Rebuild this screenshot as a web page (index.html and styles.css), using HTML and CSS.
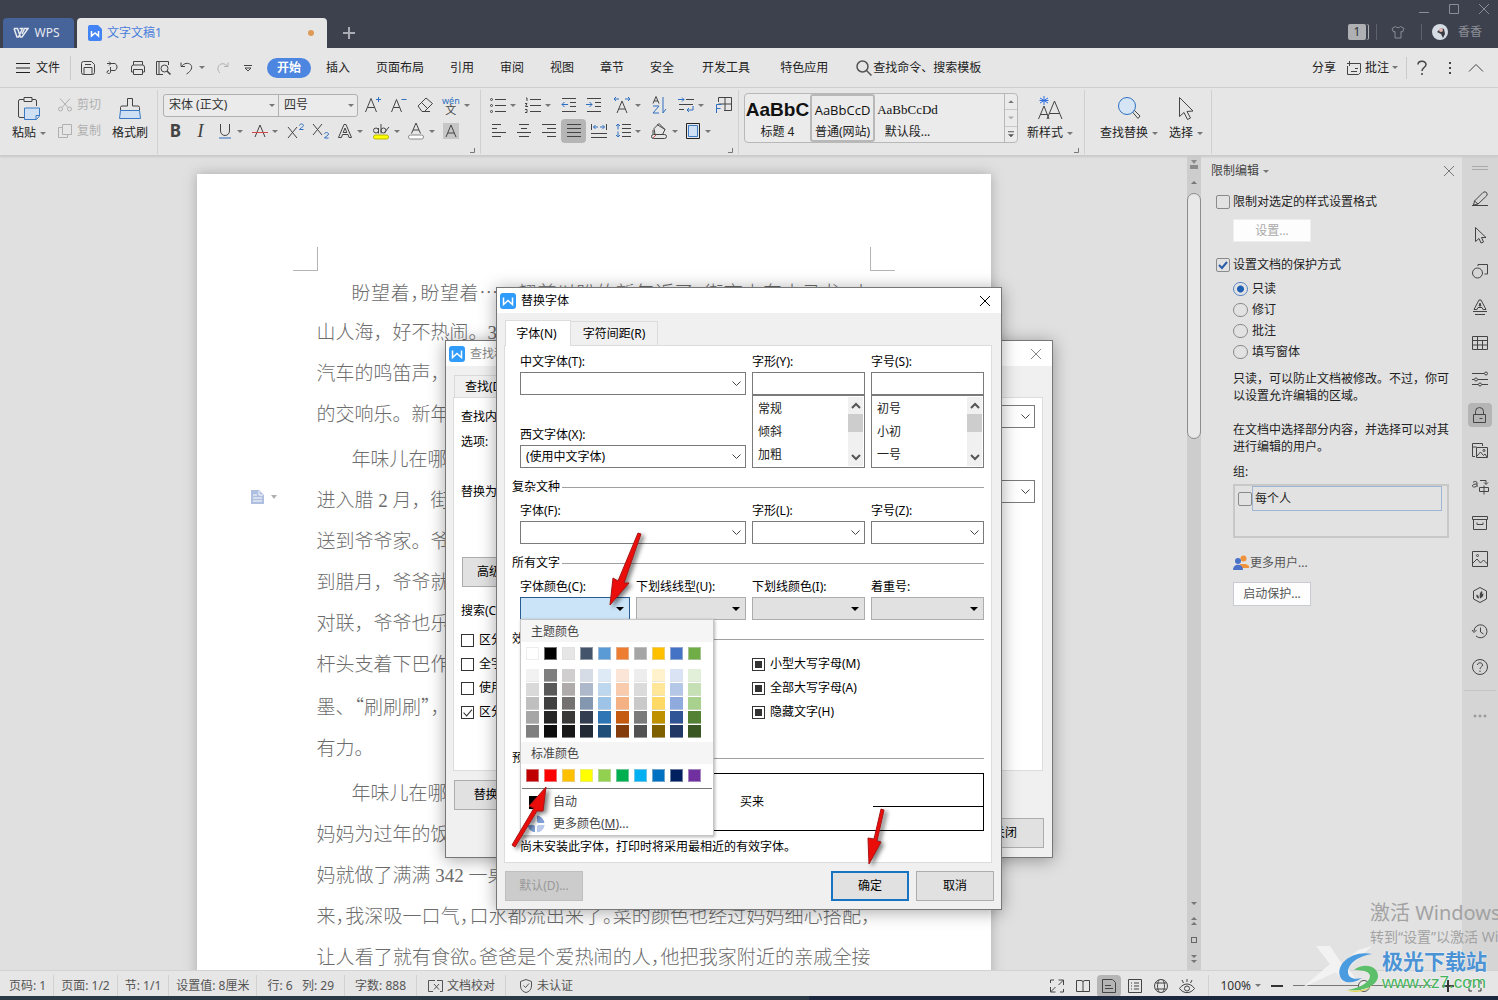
FILE: index.html
```html
<!DOCTYPE html>
<html lang="zh-CN">
<head>
<meta charset="utf-8">
<title>文字文稿1 - WPS</title>
<link rel="stylesheet" href="styles.css">
</head>
<body>
<svg class="defs" aria-hidden="true">
  <symbol id="w-logo" viewBox="0 0 16 16"><rect width="16" height="16" rx="3" fill="#2f9bfa"/><path d="M3.500 4.500v7l4.500-4 4.500 4v-7" fill="none" stroke="#fff" stroke-width="1.500"/></symbol>
  <symbol id="close" viewBox="0 0 12 12"><path d="M1 1l10 10M11 1L1 11"/></symbol>
  <symbol id="chev-up" viewBox="0 0 10 8"><path d="M1 6l4-4 4 4" stroke-width="2"/></symbol>
  <symbol id="chev-down" viewBox="0 0 10 8"><path d="M1 2l4 4 4-4" stroke-width="2"/></symbol>
</svg>
<div class="app">

<header class="titlebar">
  <button class="home-tab"><svg class="ic" width="16" height="12" viewBox="0 0 16 12"><path d="M1 1.500h3.500l3 8.500h1.500L15 1.500h-3.500L9 7M1 1.500L4 10h1.500L9.500 1.500H6.500" stroke-width="1.500"/></svg>WPS</button>
  <div class="doc-tab"><svg width="14" height="16" viewBox="0 0 14 16"><path d="M2 0h8l4 4v10a2 2 0 0 1-2 2H2a2 2 0 0 1-2-2V2a2 2 0 0 1 2-2z" fill="#4284f5"/><path d="M3.500 6v5l3.500-3 3.500 3V6" fill="none" stroke="#fff" stroke-width="1.500"/></svg><span>文字文稿1</span><i class="unsaved"></i></div>
  <button class="new-tab" aria-label="新建"><svg class="ic" width="12" height="12" viewBox="0 0 12 12"><path d="M6 0v12M0 6h12" stroke-width="2"/></svg></button>
  <div class="title-right">
    <div class="win-ctl"><svg class="ic" width="12" height="12" viewBox="0 0 12 12"><path d="M1 9.500h10"/></svg><svg class="ic" width="12" height="12" viewBox="0 0 12 12"><path d="M1.500 1.500h9v9h-9z"/></svg><svg class="ic" width="12" height="12"><use href="#close"/></svg></div>
    <div class="account"><span class="badge">1</span><i class="vline"></i><svg class="ic shirt" width="14" height="14" viewBox="0 0 14 14"><path d="M4.500 1.500c1 1.500 4 1.500 5 0l3.500 2-1.500 3.500-1.500-.5v6.500H4V6.500L2.500 7 1 3.500z"/></svg><i class="vline"></i><svg width="16" height="16" viewBox="0 0 16 16"><circle cx="8" cy="8" r="8" fill="#d5dce3"/><path d="M5 8l4-4 3 1 1 5-2 4-2-4z" fill="#3a3a44"/><circle cx="9" cy="6" r="2" fill="#e0b8b0"/></svg><span>香香</span></div>
  </div>
</header>

<nav class="menubar">
  <button class="file-btn"><svg class="ic" width="14" height="12" viewBox="0 0 14 12"><path d="M0 1.500h14M0 6h14M0 10.500h14"/></svg>文件</button>
  <i class="vline"></i>
  <div class="quick">
    <button class="tool" aria-label="保存"><svg class="ic" width="16" height="16" viewBox="0 0 16 16"><path d="M1.500 3.500a2 2 0 0 1 2-2h8l3 3v8a2 2 0 0 1-2 2h-9a2 2 0 0 1-2-2zM4 14.500v-7h8v7M5 4.500h6"/></svg></button>
    <button class="tool" aria-label="输出"><svg class="ic" width="16" height="16" viewBox="0 0 16 16"><path d="M2 3.500h8a4 4 0 0 1 0 7H5.500V7M5.500 10.500v2a2 2 0 0 1-3.500 0 2 2 0 0 1 2-2M4 1.500l2 2-2 2"/></svg></button>
    <button class="tool" aria-label="打印"><svg class="ic" width="16" height="16" viewBox="0 0 16 16"><path d="M3.500 5V1.500h9V5M3.500 12h-2V7a2 2 0 0 1 2-2h9a2 2 0 0 1 2 2v5h-2M3.500 9.500h9v5h-9z"/></svg></button>
    <button class="tool" aria-label="打印预览"><svg class="ic" width="16" height="16" viewBox="0 0 16 16"><path d="M13.500 5V1.500h-12v13H8M4 1.500v13"/><circle cx="9.500" cy="8.500" r="3.500"/><path d="M12 11l3.500 3.500" stroke-width="1.500"/></svg></button>
    <button class="tool drop" aria-label="撤销"><svg class="ic" width="16" height="16" viewBox="0 0 16 16"><path d="M2 2.500v4h4M2.500 6.500C5 3 9 2.500 11.500 4.500c2.500 2.500 1 6.500-4 9.500"/></svg></button>
    <button class="tool dim" aria-label="恢复"><svg class="ic" width="16" height="16" viewBox="0 0 16 16"><path d="M13 2.500v4H9M12.500 6.500C10 3 6 3 4 5.500c-2 3-1 6 1 7.500"/></svg></button>
    <button class="tool" aria-label="更多"><svg class="ic" width="10" height="10" viewBox="0 0 10 10"><path d="M1 2.500h8M2 5l3 3 3-3z"/></svg></button>
  </div>
  <div class="tabs">
    <a href="#" class="active">开始</a><a href="#">插入</a><a href="#">页面布局</a><a href="#">引用</a><a href="#">审阅</a><a href="#">视图</a><a href="#">章节</a><a href="#">安全</a><a href="#" class="addon">开发工具</a><a href="#" class="addon">特色应用</a>
  </div>
  <button class="search"><svg class="ic" width="16" height="16" viewBox="0 0 16 16"><circle cx="6.500" cy="6.500" r="5.500" stroke-width="1.500"/><path d="M10.500 10.500l5 5" stroke-width="1.500"/></svg>查找命令、搜索模板</button>
  <div class="menu-right">
    <button>分享</button>
    <button class="drop"><svg class="ic" width="16" height="16" viewBox="0 0 16 16"><path d="M6 3.500h8.500v9l-2 2H1.500V6M3.500 1v5M1 3.500h5M5 11.500h6M9 8.500h3"/></svg>批注</button>
    <i class="vline"></i>
    <button aria-label="帮助"><svg class="ic" width="12" height="16" viewBox="0 0 12 16"><path d="M2 4.500c0-4 8-4.500 8 0 0 3-4 3-4 6.500M6 13v2" stroke-width="1.500"/></svg></button>
    <button aria-label="更多"><svg class="ic" width="4" height="14" viewBox="0 0 4 14"><path d="M2 1v2M2 6v2M2 11v2" stroke-width="2"/></svg></button>
    <button aria-label="收起"><svg class="ic" width="16" height="10" viewBox="0 0 16 10"><path d="M1 8.500l7-7 7 7"/></svg></button>
  </div>
</nav>

<section class="ribbon">
  <div class="group clip">
    <button class="big"><svg class="ic" width="24" height="24" viewBox="0 0 24 24"><path d="M7 3.500H3a1.500 1.500 0 0 0-1.500 1.500v15a1.500 1.500 0 0 0 1.500 1.500h4M15 3.500h3a1.500 1.500 0 0 1 1.500 1.500v5M7 1.500h8v4H7z"/><path d="M7.500 12h15v8l-3 3.500h-12zM22 19.500h-3v3.500" fill="#cfe0f4" stroke="#3a7ac4"/></svg><span class="drop">粘贴</span></button>
    <div class="small">
      <button class="dim"><svg class="ic" width="16" height="16" viewBox="0 0 16 16"><circle cx="3.500" cy="12" r="2"/><circle cx="12.500" cy="12" r="2"/><path d="M5 10.500L13 1.500M11 10.500L3 1.500"/></svg>剪切</button>
      <button class="dim"><svg class="ic" width="16" height="16" viewBox="0 0 16 16"><path d="M5.500 1.500h9v10h-9zM5.500 4.500h-4v10h9v-3"/></svg>复制</button>
    </div>
    <button class="big"><svg class="ic" width="24" height="24" viewBox="0 0 24 24"><path d="M2.500 14.500v-3a1.500 1.500 0 0 1 1.500-1.500h5.500V2.500h5V10H20a1.500 1.500 0 0 1 1.500 1.500v3"/><path d="M2.500 14.500h19l1 8h-21z" fill="#cfe0f4" stroke="#3a7ac4"/></svg><span>格式刷</span></button>
  </div>

  <div class="group font">
    <div class="row">
      <div class="fontbox"><select class="face" aria-label="字体"><option>宋体 (正文)</option></select><select class="size" aria-label="字号"><option>四号</option></select></div>
      <button class="tool" aria-label="增大字号"><svg class="ic" width="18" height="18" viewBox="0 0 18 18"><path d="M1.500 16L7 2.500 12.500 16M3.500 11.500h7" /><path d="M12 3.500h5M14.500 1v5" stroke="#2f6fc0"/></svg></button>
      <button class="tool" aria-label="减小字号"><svg class="ic" width="18" height="18" viewBox="0 0 18 18"><path d="M1.500 16l5-12.500 5 12.500M3.500 11.500h6"/><path d="M11.500 3.500h5" stroke="#2f6fc0"/></svg></button>
      <button class="tool" aria-label="清除格式"><svg class="ic" width="18" height="18" viewBox="0 0 18 18"><path d="M2 10l8-8 6.500 5.500-8 8H6zM5.500 6.500l6 6M6 15.500h8"/></svg></button>
      <button class="tool drop pinyin" aria-label="拼音指南"><span><b>wén</b>文</span></button>
    </div>
    <div class="row">
      <button class="tool fmt bold">B</button>
      <button class="tool fmt italic">I</button>
      <button class="tool drop" aria-label="下划线"><svg class="ic" width="16" height="16" viewBox="0 0 16 16"><path d="M3.500 1v7a4.500 4.500 0 0 0 9 0V1"/><path d="M2 15h12" stroke="#2f6fc0"/></svg></button>
      <button class="tool drop" aria-label="删除线"><svg class="ic" width="16" height="16" viewBox="0 0 16 16"><path d="M3 14L8 2l5 12"/><path d="M0 9.500h16" stroke="#d24a4a"/></svg></button>
      <button class="tool" aria-label="上标"><svg class="ic" width="18" height="16" viewBox="0 0 18 16"><path d="M1 4l9 11M10 4L1 15"/><path d="M12.500 2.500c0-2 4-2 4 0 0 1.500-4 3-4 4h4" stroke="#2f6fc0"/></svg></button>
      <button class="tool" aria-label="下标"><svg class="ic" width="18" height="16" viewBox="0 0 18 16"><path d="M1 1l9 11M10 1L1 12"/><path d="M12.500 11c0-2 4-2 4 0 0 1.500-4 3-4 4h4" stroke="#2f6fc0"/></svg></button>
      <button class="tool drop" aria-label="文字效果"><svg class="ic" width="16" height="16" viewBox="0 0 16 16"><path d="M1.500 14.500L7 1.500h2l5.500 13H12l-1-3H5.500l-1 3zM8 5l-1.800 4.500h3.600z"/></svg></button>
      <button class="tool drop" aria-label="突出显示"><svg class="ic" width="18" height="18" viewBox="0 0 18 18"><rect x="1.500" y="13" width="15" height="4" rx="2" fill="#ff0" stroke="#b7b700"/><circle cx="4" cy="8.500" r="2.500"/><path d="M6.500 6v5.500M9 2v9.500"/><circle cx="11.500" cy="8.500" r="2.500"/><path d="M12 11l5-6"/></svg></button>
      <button class="tool drop" aria-label="字体颜色"><svg class="ic" width="18" height="18" viewBox="0 0 18 18"><rect x="1.500" y="13" width="15" height="4" rx="2" fill="#fff" stroke="#888"/><path d="M4.500 11.500L9 1l4.500 10.500M6 8h6"/></svg></button>
      <button class="tool" aria-label="字符底纹"><svg class="ic" width="16" height="16" viewBox="0 0 16 16"><path d="M0 0h16v16H0z" fill="#c6c6c6" stroke="none"/><path d="M3 14L8 2l5 12M5 10h6"/></svg></button>
    </div>
    <svg class="ic launch" width="6" height="6" viewBox="0 0 6 6"><path d="M5.500 1v4.500H1"/></svg>
  </div>

  <div class="group para">
    <div class="row">
      <button class="tool drop" aria-label="项目符号"><svg class="ic" width="16" height="16" viewBox="0 0 16 16"><path d="M5 2.500h11M5 8.500h11M5 14.500h11"/><circle cx="1.500" cy="2.500" r="1"/><circle cx="1.500" cy="8.500" r="1"/><circle cx="1.500" cy="14.500" r="1"/></svg></button>
      <button class="tool drop" aria-label="编号"><svg class="ic" width="16" height="16" viewBox="0 0 16 16"><path d="M5 2.500h11M5 8.500h11M5 14.500h11M1 1h1v3M0 6.500h2L.5 9.500H3M0 12.500h2v3H0"/></svg></button>
      <button class="tool" aria-label="减少缩进"><svg class="ic" width="16" height="16" viewBox="0 0 16 16"><path d="M1 1.500h14M9 5.500h6M9 9.500h6M1 14.500h14"/><path d="M7 7.500H1M3.500 5L1 7.500 3.500 10" stroke="#2f6fc0"/></svg></button>
      <button class="tool" aria-label="增加缩进"><svg class="ic" width="16" height="16" viewBox="0 0 16 16"><path d="M1 1.500h14M9 5.500h6M9 9.500h6M1 14.500h14"/><path d="M0 7.500h6M3.500 5L6 7.500 3.500 10" stroke="#2f6fc0"/></svg></button>
      <button class="tool drop wide" aria-label="中文版式"><svg class="ic" width="18" height="18" viewBox="0 0 18 18"><path d="M4 17L9 5l5 12M6 13h6"/><path d="M1 3h5M3 1L1 3l2 2M17 3h-5M15 1l2 2-2 2" stroke="#2f6fc0"/></svg></button>
      <button class="tool" aria-label="排序"><svg class="ic" width="16" height="18" viewBox="0 0 16 18"><path d="M2 7.500l3-7 3 7M3 5h4"/><path d="M2 10h6l-6 7h6M12 1v16l3-4" stroke="#2f6fc0"/></svg></button>
      <button class="tool drop wide" aria-label="换行"><svg class="ic" width="16" height="16" viewBox="0 0 16 16"><path d="M8 2.500h8M1 7.500h14M1 12.500h5"/><path d="M0 2.500h6M4 .5l2 2-2 2M15 9v4H9M11 11l-2 2 2 2" stroke="#2f6fc0"/></svg></button>
      <button class="tool" aria-label="制表位"><svg class="ic" width="18" height="18" viewBox="0 0 18 18"><path d="M3.500 6V1.500h13v13H9M10 1.500v13M3.500 8h13"/><path d="M1.500 17V8.500h5M1.500 12.500h4" stroke="#2f6fc0"/></svg></button>
    </div>
    <div class="row">
      <button class="tool" aria-label="左对齐"><svg class="ic" width="14" height="14" viewBox="0 0 14 14"><path d="M0 .5h9M0 4.500h5M0 8.500h14M0 12.500h9"/></svg></button>
      <button class="tool" aria-label="居中"><svg class="ic" width="14" height="14" viewBox="0 0 14 14"><path d="M2 .5h10M4 4.500h6M0 8.500h14M2 12.500h10"/></svg></button>
      <button class="tool" aria-label="右对齐"><svg class="ic" width="14" height="14" viewBox="0 0 14 14"><path d="M0 .5h14M5 4.500h9M0 8.500h14M5 12.500h9"/></svg></button>
      <button class="tool on" aria-label="两端对齐"><svg class="ic" width="14" height="14" viewBox="0 0 14 14"><path d="M0 .5h14M0 4.500h14M0 8.500h14M0 12.500h14"/></svg></button>
      <button class="tool" aria-label="分散对齐"><svg class="ic" width="16" height="16" viewBox="0 0 16 16"><path d="M.5 1v6M15.500 1v6M0 10.500h16M0 14.500h16"/><path d="M2.500 4H7M4.500 2l-2 2 2 2M13.500 4H9M11.500 2l2 2-2 2" stroke="#2f6fc0"/></svg></button>
      <button class="tool drop" aria-label="行距"><svg class="ic" width="16" height="16" viewBox="0 0 16 16"><path d="M7 1.500h9M7 5.500h9M7 9.500h9M7 13.500h9"/><path d="M3 1v5.500M1 3l2-2 2 2M3 14V8.500M1 12l2 2 2-2" stroke="#2f6fc0"/></svg></button>
      <button class="tool drop" aria-label="底纹"><svg class="ic" width="18" height="18" viewBox="0 0 18 18"><path d="M4 6.500l5-5 6 6-2.500 5H5zM3 8v4M7 2.500l8 5"/><rect x="1.500" y="12.500" width="15" height="4" rx="2"/><path d="M3 16l3-3" stroke="#d24a4a"/></svg></button>
      <button class="tool drop" aria-label="边框"><svg class="ic" width="16" height="16" viewBox="0 0 16 16"><path d="M1.500 .5h13v15h-13z" stroke="#222"/><path d="M3.500 2.500h9v11h-9z" fill="#cfe0f4" stroke="#3a7ac4"/></svg></button>
    </div>
    <svg class="ic launch" width="6" height="6" viewBox="0 0 6 6"><path d="M5.500 1v4.500H1"/></svg>
  </div>

  <div class="group styles">
    <div class="gallery">
      <button class="style h4"><b>AaBbC</b><span>标题 4</span></button>
      <button class="style sel"><b>AaBbCcD</b><span>普通(网站)</span></button>
      <button class="style def"><b>AaBbCcDd</b><span>默认段...</span></button>
      <div class="gal-scroll"><i><i class="tri up"></i></i><i><i class="tri down faint"></i></i><i><i class="tri down bar"></i></i></div>
    </div>
    <button class="big newstyle"><svg class="ic" width="26" height="24" viewBox="0 0 26 24"><path d="M1.500 23L7 10l5 13M3.500 18.500h7M10 23l7.500-18 7.500 18M12.500 17.500h10"/><path d="M7 0v9M3 2l8 5M11 2L3 7M2.500 4.500h9" stroke="#2f6fe0"/></svg><span class="drop">新样式</span></button>
    <svg class="ic launch" width="6" height="6" viewBox="0 0 6 6"><path d="M5.500 1v4.500H1"/></svg>
  </div>

  <div class="group edit">
    <button class="big"><svg class="ic" width="24" height="24" viewBox="0 0 24 24"><path d="M15 15.500l2-1.500 6 6-2 2.500z"/><circle cx="10" cy="10" r="8.500" fill="#d5e5f5" stroke="#2f6fc0"/></svg><span class="drop">查找替换</span></button>
    <button class="big"><svg class="ic" width="24" height="24" viewBox="0 0 24 24"><path d="M5.500 1.500v19l4.500-4 3.500 7 3-1.500-3.500-6.500 6-.5z"/></svg><span class="drop">选择</span></button>
  </div>
</section>

<main class="workspace">
  <div class="canvas">
    <article class="page">
      <div class="crop"><i class="tl"></i><i class="tr"></i></div>
      <p><span class="line first tight full">盼望着，盼望着<span class="dots">……</span>翘首以盼的新年近了，街市上车水马龙，人</span><span class="line">山人海，好不热闹。3</span><span class="line">汽车的鸣笛声，</span><span class="line">的交响乐。新年</span></p>
      <p><span class="line first">年味儿在哪</span><span class="line">进入腊 2 月，街</span><span class="line">送到爷爷家。爷</span><span class="line">到腊月，爷爷就</span><span class="line">对联，爷爷也乐</span><span class="line">杆头支着下巴作</span><span class="line quote">墨、<span class="dots">“</span>刷刷刷<span class="dots">”</span>，</span><span class="line">有力。</span></p>
      <p><span class="line first">年味儿在哪</span><span class="line">妈妈为过年的饭</span><span class="line">妈就做了满满 342 一桌</span><span class="line tight full">来，我深吸一口气，口水都流出来了。菜的颜色也经过妈妈细心搭配，</span><span class="line tight full">让人看了就有食欲。爸爸是个爱热闹的人，他把我家附近的亲戚全接</span></p>
      <svg class="para-mark" width="26" height="16" viewBox="0 0 26 16"><path d="M0 1h8l5 5v9H0z" fill="#aebfdf"/><path d="M2 6h4M2 9h9M2 12h9M8 2v4h4" stroke="#fff" fill="none"/><path d="M20 6h6l-3 4z" fill="#b0b0b0"/></svg>
    </article>
  </div>
  <div class="vscroll"><svg width="8" height="10" viewBox="0 0 8 10"><path d="M1 0h6L4 4zM0 5h8v4H0z" fill="#8a8a8a"/></svg><i class="tri up"></i><div class="thumb"></div><div class="nav-btns"><i class="tri down"></i><i class="pair"><i class="tri up"></i><i class="tri up"></i></i><i class="sq"></i><i class="pair"><i class="tri down"></i><i class="tri down"></i></i></div></div>

  <aside class="panel">
    <h2><span class="drop">限制编辑</span><svg class="ic" width="12" height="12"><use href="#close"/></svg></h2>
    <label class="opt"><input type="checkbox">限制对选定的样式设置格式</label>
    <button class="pbtn off">设置...</button>
    <label class="opt second"><input type="checkbox" checked>设置文档的保护方式</label>
    <div class="radios">
      <label><input type="radio" name="protect" checked>只读</label>
      <label><input type="radio" name="protect">修订</label>
      <label><input type="radio" name="protect">批注</label>
      <label><input type="radio" name="protect">填写窗体</label>
    </div>
    <p>只读，可以防止文档被修改。不过，你可以设置允许编辑的区域。</p>
    <p>在文档中选择部分内容，并选择可以对其进行编辑的用户。</p>
    <p class="grp">组:</p>
    <div class="users"><label><input type="checkbox"><span>每个人</span></label></div>
    <a href="#" class="more-users"><svg width="16" height="16" viewBox="0 0 16 16"><circle cx="10.500" cy="3.500" r="3" fill="#f0923c"/><path d="M7 9h6l3 2v2H8z" fill="#f0923c"/><circle cx="5" cy="6" r="3" fill="#4a72c8"/><path d="M0 15c0-7 10-7 10 0z" fill="#4a72c8"/></svg>更多用户...</a>
    <button class="pbtn">启动保护...</button>
  </aside>

  <div class="rail">
    <i class="grip"></i>
    <button aria-label="样式"><svg class="ic" width="18" height="18" viewBox="0 0 18 18"><path d="M1 15.500h16M2.500 15l1-4L12 2.500q2-1.500 3.500 0t0 3.500L7 14zM3.500 11L7 14"/></svg></button>
    <button aria-label="选择"><svg class="ic" width="18" height="18" viewBox="0 0 18 18"><path d="M4.500 1.500v14l3.500-3 2 4.500 2.500-1-2-4.500h4.500z"/></svg></button>
    <button aria-label="形状"><svg class="ic" width="18" height="18" viewBox="0 0 18 18"><circle cx="6.500" cy="11" r="5"/><path d="M7 4V2.500h9.500V12h-3"/></svg></button>
    <button aria-label="艺术字"><svg class="ic" width="18" height="18" viewBox="0 0 18 18"><path d="M3 11.500L8 2h2l5 9.500h-3l-1-2H7l-1 2zM9 5L8 8h2zM2 13.500h14M4 16.500h10"/></svg></button>
    <button aria-label="表格"><svg class="ic" width="18" height="18" viewBox="0 0 18 18"><path d="M1.500 2.500h15v13h-15zM1.500 6.500h15M1.500 11h15M6.500 2.500v13M11.500 6.500v9"/></svg></button>
    <button aria-label="属性"><svg class="ic" width="18" height="18" viewBox="0 0 18 18"><path d="M1 3.500h12M1 9.500h2M7 9.500h10M1 14.500h6M11 14.500h6"/><circle cx="15" cy="3.500" r="1.500"/><circle cx="5" cy="9.500" r="1.500"/><circle cx="9" cy="14.500" r="1.500"/></svg></button>
    <button class="on" aria-label="限制编辑"><svg class="ic" width="18" height="18" viewBox="0 0 18 18"><path d="M2.500 8.500h12v8h-12zM4.500 8.500V5.500a4 4 0 0 1 8 0v3M8.500 12.500h3"/></svg></button>
    <button aria-label="图片库"><svg class="ic" width="18" height="18" viewBox="0 0 18 18"><path d="M4 14.500H1.500v-13h10V4M1.500 5h4M5.500 5.500h11v10h-11zM6 14l3.500-4 3 3.500 1.500-1.500 2 3"/><circle cx="13" cy="8.500" r="1"/></svg></button>
    <button aria-label="翻译"><svg class="ic" width="18" height="18" viewBox="0 0 18 18"><path d="M2 4.500c1-1.500 4-1.500 4 .5v4M6 6C3 6 1.500 6.500 1.500 8S5 9.500 6 7.500M9 2.500h6V6M13 4.500l2 2 2-2M8.500 9.500h9v4h-9zM13 7.500v9"/></svg></button>
    <button aria-label="归档"><svg class="ic" width="18" height="18" viewBox="0 0 18 18"><path d="M1.500 2.500h15v3h-15zM2.500 5.500v10h13v-10M6 8.500v2h6v-2"/></svg></button>
    <button aria-label="图片"><svg class="ic" width="18" height="18" viewBox="0 0 18 18"><path d="M1.500 1.500h15v15h-15zM2 13l4-4 3.500 4 3-3 4 4"/><circle cx="6.500" cy="5.500" r="1"/></svg></button>
    <button aria-label="图标"><svg class="ic" width="18" height="18" viewBox="0 0 18 18"><path d="M9 1.500l6.500 3.500v8L9 16.500 2.500 13V5z"/><path d="M8 12.500c-2.500-.5-3-2.500-2.500-4C7 9 8 10 8 12.500zM9 12.500C8 9 9 6 11 5c.5 1 .5 2 0 3l1.500-.5c0 2.500-1.500 4.500-3.500 5z" fill="#444" stroke="none"/></svg></button>
    <button aria-label="历史"><svg class="ic" width="18" height="18" viewBox="0 0 18 18"><path d="M3 9a6.500 6.500 0 1 1 2 5M1 8l2 2.500L5.500 8M9.500 5.500V10l3 2"/></svg></button>
    <button aria-label="帮助"><svg class="ic" width="18" height="18" viewBox="0 0 18 18"><circle cx="9" cy="9" r="7.500"/><path d="M6.500 7c0-3 5-3 5 0 0 2-2.500 2-2.500 4M9 12.500V14"/></svg></button>
    <button class="more" aria-label="更多"><svg class="ic" width="14" height="4" viewBox="0 0 14 4"><circle cx="2" cy="2" r="1"/><circle cx="7" cy="2" r="1"/><circle cx="12" cy="2" r="1"/></svg></button>
  </div>
</main>

<footer class="status">
  <span>页码: 1</span><span>页面: 1/2</span><span>节: 1/1</span><span>设置值: 8厘米</span><span>行: 6 &nbsp; 列: 29</span><span>字数: 888</span>
  <span><svg class="ic" width="16" height="14" viewBox="0 0 16 14"><path d="M6 12.500H1.500v-11H8M10 1.500h5.500v11H13M7 5l5 5.500M12 5l-5 5.500"/></svg>文档校对</span>
  <span><svg class="ic" width="14" height="14" viewBox="0 0 14 14"><path d="M7 .5l5.500 2V7c0 4-3 6-5.500 6.500C4.500 13 1.500 11 1.500 7V2.500zM4.500 6.500l2 2 3.500-4"/></svg>未认证</span>
  <div class="views">
    <button aria-label="全屏"><svg class="ic" width="16" height="16" viewBox="0 0 16 16"><path d="M9.500 2h5v5M14.500 2l-5 5M6.500 14h-5V9M1.500 14l5-5M1.500 5V2H5M14.500 11v3H11"/></svg></button>
    <button aria-label="阅读"><svg class="ic" width="16" height="16" viewBox="0 0 16 16"><path d="M1.500 2.500H6q2 0 2 1.500 0-1.500 2-1.500h4.500v11H1.500zM8 4v10"/></svg></button>
    <button class="on" aria-label="页面"><svg class="ic" width="16" height="16" viewBox="0 0 16 16"><path d="M1.500 1.500h10l3 3v10h-13zM4 7.500h6M4 10.500h8"/></svg></button>
    <button aria-label="大纲"><svg class="ic" width="16" height="16" viewBox="0 0 16 16"><path d="M1.500 1.500h13v13h-13zM4 5h1M7 5h5M4 8h1M7 8h5M4 11h1M7 11h5"/></svg></button>
    <button aria-label="Web"><svg class="ic" width="16" height="16" viewBox="0 0 16 16"><circle cx="8" cy="8" r="6.500"/><path d="M2.500 5h11M2.500 11h11M6 2c-2 4-2 8 0 12M10 2c2 4 2 8 0 12"/></svg></button>
    <button aria-label="护眼"><svg class="ic" width="16" height="16" viewBox="0 0 16 16"><path d="M.5 10.500c4-6 11-6 15 0-4 5.500-11 5.500-15 0zM8 1v3M3 2l1.500 3M13 2l-1.500 3"/><circle cx="8" cy="10.500" r="2.500"/></svg></button>
  </div>
  <div class="zoom"><button class="drop">100%</button><svg class="ic" width="12" height="2" viewBox="0 0 12 2"><path d="M0 1h12" stroke-width="2"/></svg><input type="range" min="0" max="100" value="51" aria-label="缩放"><svg class="ic" width="12" height="12" viewBox="0 0 12 12"><path d="M0 6h12M6 0v12" stroke-width="2"/></svg><svg class="ic fit" width="14" height="12" viewBox="0 0 14 12"><path d="M4 1H1v3M10 1h3v3M4 11H1V8M10 11h3V8M7 5v2"/></svg></div>
</footer>
<div class="taskbar"><i></i></div>

<section class="dialog find" role="dialog" aria-label="查找和替换">
  <header><svg width="16" height="16"><use href="#w-logo"/></svg><span>查找和替换</span><svg class="ic x" width="12" height="12"><use href="#close"/></svg></header>
  <div class="find-tabs"><button>查找(D)</button></div>
  <div class="find-body">
    <label class="f1">查找内容:<select><option></option></select></label>
    <div class="f2">选项:</div>
    <label class="f3">替换为:<select><option></option></select></label>
    <button class="wbtn adv">高级搜索</button>
    <div class="f4">搜索(C)</div>
    <label class="ck"><input type="checkbox">区分大小写</label>
    <label class="ck"><input type="checkbox">全字匹配</label>
    <label class="ck"><input type="checkbox">使用通配符</label>
    <label class="ck"><input type="checkbox" checked>区分全半角</label>
  </div>
  <button class="wbtn rep">替换(R)</button>
  <div class="find-foot"><button class="wbtn">关闭</button></div>
</section>

<section class="dialog fontdlg" role="dialog" aria-label="替换字体">
  <header><svg width="16" height="16"><use href="#w-logo"/></svg><span>替换字体</span><svg class="ic x" width="12" height="12"><use href="#close"/></svg></header>
  <div class="dtabs"><button class="cur">字体(N)</button><button>字符间距(R)</button></div>
  <div class="dbody">
    <div class="g4 top">
      <div class="faces">
        <label>中文字体(T):<select><option></option></select></label>
        <label>西文字体(X):<select><option>(使用中文字体)</option></select></label>
      </div>
      <div class="lister"><label>字形(Y):<input type="text"></label>
        <div class="list"><ul><li>常规</li><li>倾斜</li><li>加粗</li></ul><div class="sb"><svg class="ic" width="10" height="8"><use href="#chev-up"/></svg><i></i><svg class="ic" width="10" height="8"><use href="#chev-down"/></svg></div></div></div>
      <div class="lister"><label>字号(S):<input type="text"></label>
        <div class="list"><ul><li>初号</li><li>小初</li><li>一号</li></ul><div class="sb"><svg class="ic" width="10" height="8"><use href="#chev-up"/></svg><i></i><svg class="ic" width="10" height="8"><use href="#chev-down"/></svg></div></div></div>
    </div>
    <h3>复杂文种</h3>
    <div class="g4">
      <label class="span2">字体(F):<select><option></option></select></label>
      <label>字形(L):<select><option></option></select></label>
      <label>字号(Z):<select><option></option></select></label>
    </div>
    <h3>所有文字</h3>
    <div class="g4">
      <div class="cell"><span id="c1">字体颜色(C):</span><button class="pick open" aria-labelledby="c1"></button></div>
      <div class="cell"><span id="c2">下划线线型(U):</span><button class="pick" aria-labelledby="c2"></button></div>
      <div class="cell"><span id="c3">下划线颜色(I):</span><button class="pick" aria-labelledby="c3"></button></div>
      <div class="cell"><span id="c4">着重号:</span><button class="pick" aria-labelledby="c4"></button></div>
    </div>
    <h3>效果</h3>
    <div class="effects">
      <label class="ck mixed"><input type="checkbox">小型大写字母(M)</label>
      <label class="ck mixed"><input type="checkbox">全部大写字母(A)</label>
      <label class="ck mixed"><input type="checkbox">隐藏文字(H)</label>
    </div>
    <h3>预览</h3>
    <div class="preview"><i></i><span>买来</span><i></i></div>
    <p class="note">尚未安装此字体，打印时将采用最相近的有效字体。</p>
  </div>
  <footer><button class="wbtn" disabled>默认(D)...</button><button class="wbtn ok">确定</button><button class="wbtn">取消</button></footer>

  <div class="popup">
    <h4>主题颜色</h4>
    <div class="swatches" data-palette="theme"></div>
    <div class="swatches shades" data-palette="shades"></div>
    <h4>标准颜色</h4>
    <div class="swatches" data-palette="standard"></div>
    <hr>
    <button><i class="auto"></i>自动</button>
    <button><svg width="18" height="18" viewBox="0 0 18 18"><circle cx="9" cy="9" r="8.500" fill="#7f9fd8"/><path d="M9 9V.5A8.500 8.500 0 0 0 .5 9z" fill="#e3ebf8"/><path d="M9 9v8.500A8.500 8.500 0 0 0 17.500 9z" fill="#b9caec"/><path d="M9 0v18M0 9h18" stroke="#fff" stroke-width="2"/><path d="M9 4l1.500 3.500L14 9l-3.500 1.500L9 14l-1.500-3.500L4 9l3.500-1.500z" fill="#fff"/></svg><span>更多颜色(<u>M</u>)...</span></button>
  </div>
</section>

<svg class="arrows" width="400" height="350" viewBox="500 530 400 350" aria-hidden="true">
  <g fill="#ea0d0a" stroke="#a81414" stroke-width="1" stroke-linejoin="round">
    <path d="M638 533l3 1-17 49 5 0-19 22 3-27 5 3z"/>
    <path d="M512 845l3 2 22-36 6 0 3-24-17 19 5 2z"/>
    <path d="M881 809l3 1-7 31 4 1-12 22-1-26 6 1z"/>
  </g>
</svg>

<div class="activate"><b>激活 Windows</b><span>转到“设置”以激活 Windows。</span></div>
<div class="brand">
  <svg width="84" height="52" viewBox="0 0 84 52"><path d="M14 2h14l12 18L56 6l14-4-24 22 10 14H42l-8-10L0 44l28-24z" fill="#f4f4f4" opacity=".9"/><path d="M70 10C50 6 34 20 38 32c2 8 14 8 22 2-8 2-14 0-14-6 0-8 10-16 24-18z" fill="#4a9be0"/><path d="M52 26c10-8 24-4 24 6 0 8-12 16-30 14 12-2 22-8 22-14 0-4-6-6-16-6z" fill="#5cbf6a"/><path d="M44 46c10 4 22 2 30-8-6 8-18 10-30 8z" fill="#e6d64a"/></svg>
  <div><b>极光下载站</b><span>www.xz7.com</span></div>
</div>
</div>
<script src="palette.js"></script>
</body>
</html>
```
FILE: palette.js
```js
// Colour tables of the font colour menu, ten columns each.
const palettes = {
  theme: "ffffff 000000 e7e6e6 44546a 5b9bd5 ed7d31 a5a5a5 ffc000 4472c4 70ad47",
  shades: "f2f2f2 7f7f7f d0cece d6dce5 deebf7 fbe5d6 ededed fff2cc dae3f3 e2f0d9 " +
    "d9d9d9 595959 afabab adb9ca bdd7ee f8cbad dbdbdb ffe699 b4c7e7 c5e0b4 " +
    "bfbfbf 404040 767171 8497b0 9dc3e6 f4b183 c9c9c9 ffd966 8faadc a9d18e " +
    "a6a6a6 262626 3b3838 333f50 2e75b6 c55a11 7b7b7b bf9000 2f5597 548235 " +
    "7f7f7f 0d0d0d 171717 222a35 1f4e79 843c0c 525252 7f6000 203864 385723",
  standard: "c00000 ff0000 ffc000 ffff00 92d050 00b050 00b0f0 0070c0 002060 7030a0"
};
document.querySelectorAll("[data-palette]").forEach(box => {
  palettes[box.dataset.palette].split(" ").forEach(hex => {
    const b = document.createElement("button");
    b.style.background = "#" + hex;
    b.setAttribute("aria-label", "#" + hex);
    box.append(b);
  });
});
```
FILE: styles.css
```css
* { box-sizing: border-box; margin: 0; padding: 0; }
body { font: 12px/16px "Noto Sans", "Noto Sans CJK SC", sans-serif; color: #222; }
button, input, select { font: inherit; color: inherit; background: none; border: 0; border-radius: 0; }
button { display: inline-flex; align-items: center; justify-content: center; white-space: nowrap; }
a { color: inherit; text-decoration: none; }
ul { list-style: none; }
svg { display: block; flex: none; }
.defs { position: absolute; width: 0; height: 0; }
.ic { fill: none; stroke: currentColor; stroke-width: 1; }
.app { position: relative; display: flex; flex-direction: column; height: 100vh; overflow: hidden; background: #e6e6e6; }
.vline { width: 1px; background: #cacaca; flex: none; }
.drop::after { content: ""; flex: none; display: inline-block; border: 3px solid transparent; border-top-color: #777; border-bottom: 0; margin-left: 4px; vertical-align: middle; }

/* title bar */
.titlebar { display: flex; align-items: flex-end; height: 48px; flex: none; background: #3d414d; color: #c3c6cc; padding-left: 3px; }
.home-tab { width: 71px; height: 30px; gap: 5px; padding-right: 4px; background: #46639a; border-radius: 4px 4px 0 0; color: #e6e9ef; }
.doc-tab { display: flex; align-items: center; gap: 5px; width: 250px; height: 30px; margin-left: 3px; padding: 0 13px 0 11px; background: #e6e6e6; border-radius: 4px 4px 0 0; color: #4a80dc; }
.unsaved { width: 6px; height: 6px; border-radius: 3px; background: #dd9a56; margin-left: auto; }
.new-tab { width: 44px; height: 30px; color: #a9acb3; }
.title-right { margin-left: auto; height: 48px; display: flex; flex-direction: column; align-items: flex-end; color: #8b8e96; }
.win-ctl { display: flex; gap: 18px; padding: 3px 8px 0 0; height: 20px; }
.account { display: flex; align-items: center; gap: 10px; padding-right: 16px; height: 24px; }
.account .vline { height: 16px; background: #5d616b; }
.account .badge { width: 18px; background: #aeb0b4; color: #333; text-align: center; border-radius: 2px; box-shadow: 2px 0 0 #3d414d, 3px 0 0 #aeb0b4; }
.shirt { margin: 0 6px 0 4px; }

/* menu bar */
.menubar { display: flex; align-items: center; height: 40px; flex: none; border-bottom: 1px solid #cfcfcf; padding-left: 16px; }
.file-btn { gap: 6px; width: 44px; margin-right: 10px; }
.menubar > .vline { height: 24px; }
.quick { display: flex; align-items: center; margin-left: 4px; }
.tool { width: 25px; height: 24px; flex: none; color: #444; }
.tool.drop { width: 35px; justify-content: flex-start; padding-left: 4px; }
.tool.drop.wide { width: 40px; padding-left: 7px; }
.dim, .tool.dim { color: #b0b0b0; }
.tabs { display: flex; align-items: center; margin-left: 7px; }
.tabs a { padding: 0 13px; line-height: 20px; }
.tabs .active { width: 44px; padding: 0; margin-right: 2px; text-align: center; background: #4d86e0; color: #fff; border-radius: 10px; font-weight: bold; }
.tabs .addon { padding: 0 15px; }
.search { margin-left: 13px; gap: 1px; }
.search svg { color: #555; }
.menu-right { display: flex; align-items: center; margin-left: auto; padding-right: 9px; }
.menu-right svg { color: #444; }
.menu-right .drop { margin: 0 8px 0 10px; gap: 3px; }
.menu-right .drop::after { margin-left: 0; }
.menu-right .vline { height: 22px; }
.menu-right .vline ~ button { width: 26px; }
.menu-right .vline + button { width: 30px; }

/* ribbon */
.ribbon { display: flex; height: 68px; flex: none; border-bottom: 1px solid #cbcbcb; box-shadow: 0 1px 2px #c8c8c8; position: relative; z-index: 1; }
.group { position: relative; height: 64px; margin-top: 2px; padding: 2px 0 0 5px; border-right: 1px solid #d0d0d0; flex: none; }
.row { display: flex; align-items: center; height: 26px; }
.launch { position: absolute; right: 5px; bottom: 1px; color: #777; }
.big { flex-direction: column; gap: 4px; height: 50px; padding: 3px 0 0; }
.big svg { color: #444; }
.big span { line-height: 18px; }
.clip { width: 158px; display: flex; padding-left: 12px; gap: 11px; }
.small { display: flex; flex-direction: column; }
.small button { height: 26px; gap: 4px; }
.font { width: 323px; }
.fontbox { display: flex; width: 195px; height: 23px; border: 1px solid #b0b0b0; border-radius: 3px; margin-right: 2px; background: #ebebeb; }
.fontbox select, .find select, .dbody select { appearance: none; background: no-repeat right 6px center; }
.fontbox select { padding: 0 4px 0 5px; color: #333; background-image: url("data:image/svg+xml,%3Csvg xmlns='http://www.w3.org/2000/svg' width='6' height='3'%3E%3Cpath d='M0 0h6L3 3z' fill='%23777'/%3E%3C/svg%3E"); background-position: right 3px center; }
.fontbox .face { width: 115px; border-right: 1px solid #b0b0b0; }
.fontbox .size { flex: 1; }
.font .row:first-child .tool { width: 26px; }
.font .row:first-child .drop { width: 35px; }
.pinyin span { display: flex; flex-direction: column; line-height: 9px; font-size: 11px; align-items: center; }
.pinyin b { font-size: 9px; line-height: 8px; font-weight: normal; color: #2f6fc0; }
.fmt { font-size: 17px; }
.bold { font-weight: bold; }
.italic { font-family: "Liberation Serif", serif; font-style: italic; font-size: 19px; }
.para { width: 258px; }
.para .on, .rail .on, .views .on { background: #b5b5b5; border-radius: 4px; }
.styles { width: 346px; display: flex; }
.gallery { display: flex; width: 274px; height: 50px; margin-top: 1px; border: 1px solid #b8b8b8; border-radius: 4px; background: #ebebeb; overflow: hidden; }
.style { flex-direction: column; justify-content: flex-start; width: 65px; height: 48px; border: 2px solid transparent; padding-top: 1px; flex: none; }
.style b { height: 26px; color: #111; font: 14px/26px "Noto Sans", sans-serif; }
.style span { line-height: 18px; }
.style.h4 b { font: bold 19px/26px "Liberation Sans", sans-serif; }
.style.sel { border-color: #b8b8b8; border-radius: 3px; }
.style.sel b { font-family: "Open Sans", sans-serif; font-size: 13px; }
.style.def b { font: 13px/26px "Liberation Serif", serif; }
.gal-scroll { display: flex; flex-direction: column; width: 13px; margin-left: auto; border-left: 1px solid #b8b8b8; }
.gal-scroll > i { flex: 1; display: flex; align-items: center; justify-content: center; }
.gal-scroll > i + i { border-top: 1px solid #c8c8c8; }
.tri { width: 6px; height: 3px; flex: none; background: #777; }
.tri.faint { background: #b0b0b0; }
.tri.down { clip-path: polygon(0 0, 100% 0, 50% 100%); }
.tri.bar { height: 6px; background: #555; clip-path: polygon(0 0, 100% 0, 100% 1px, 0 1px, 0 3px, 100% 3px, 50% 100%, 0 3px); }
.tri.up { clip-path: polygon(0 100%, 100% 100%, 50% 0); }
.newstyle { margin-left: 9px; }
.edit { width: 127px; display: flex; padding-left: 15px; gap: 11px; }

/* document */
.workspace { display: flex; flex: 1; min-height: 0; background: #e0e0e0; }
.canvas { flex: 1; overflow: hidden; padding-top: 18px; }
.page { position: relative; width: 794px; height: 1123px; margin: 0 auto; background: #fff; box-shadow: 0 0 12px #a8a8a8; padding: 73px 120px 0; font: 300 19px/41px "Liberation Serif", "Noto Sans CJK SC", serif; color: #6c6c6c; }
.crop { display: flex; justify-content: space-between; margin: 0 -24px; height: 24px; }
.crop i { width: 25px; border-bottom: 1px solid #b4b4b4; }
.crop .tl { border-right: 1px solid #b4b4b4; }
.crop .tr { border-left: 1px solid #b4b4b4; }
.page p { margin-bottom: 4px; }
.line { display: block; white-space: nowrap; }
.first { padding-left: 35px; }
.dots { font-family: "Noto Sans CJK SC", sans-serif; }
.tight, .quote .dots { font-feature-settings: "halt"; }
.full { white-space: normal; text-align-last: justify; height: 41px; overflow: hidden; }
.para-mark { position: absolute; left: 54px; top: 315px; }
.vscroll { width: 14px; flex: none; background: #cdcdcd; display: flex; flex-direction: column; align-items: center; padding-top: 4px; }
.vscroll > .tri { margin: 11px 0 9px; }
.thumb { width: 14px; height: 246px; border: 1px solid #8c8c8c; border-radius: 7px; background: #e8e8e8; }
.nav-btns { margin-top: auto; display: flex; flex-direction: column; align-items: center; gap: 12px; padding-bottom: 7px; }
.pair { display: flex; flex-direction: column; gap: 2px; }
.sq { width: 6px; height: 6px; border: 1px solid #666; }

/* protection panel */
.panel { width: 261px; flex: none; background: #e2e2e2; padding: 6px 7px 0 10px; }
.panel h2 { display: flex; align-items: center; justify-content: space-between; font-size: 12px; font-weight: normal; height: 18px; color: #444; }
.panel h2 svg { color: #777; }
.opt { display: flex; align-items: center; gap: 3px; margin: 13px 0 0 5px; height: 18px; }
.opt.second { margin-top: 14px; }
.panel input, .ck input { appearance: none; flex: none; width: 14px; height: 14px; border: 1px solid #8a8a8a; border-radius: 2px; }
.panel input[type=checkbox]:checked, .ck input:checked { background: url("data:image/svg+xml,%3Csvg xmlns='http://www.w3.org/2000/svg' width='12' height='12'%3E%3Cpath d='M2 6l3 3 5-6' fill='none' stroke='%232a5ca8' stroke-width='2'/%3E%3C/svg%3E") center no-repeat; }
.pbtn { display: flex; width: 78px; height: 23px; margin: 8px 0 0 22px; background: #fdfdfd; border: 1px solid #c8ccd0; color: #555; }
.pbtn.off { color: #aaa; border-color: #eee; }
.radios { margin: 4px 0 0 22px; }
.radios label { display: flex; align-items: center; gap: 4px; height: 21px; }
.radios input { width: 15px; height: 14px; border-radius: 7px; }
.radios input:checked { background: radial-gradient(circle, #2160b4 3px, transparent 4px); border-color: #5b87c4; }
.panel p { margin: 8px 0 17px 22px; line-height: 17px; }
.panel .grp { margin: -9px 0 4px 22px; }
.users { height: 54px; margin-left: 22px; border: 2px solid #c8c8c8; width: 216px; padding: 0 5px 0 3px; }
.users label { display: flex; align-items: center; }
.users span { flex: 1; border: 1px solid #a0b4d4; height: 25px; line-height: 23px; padding-left: 2px; }
.more-users { display: flex; align-items: center; margin: 17px 0 0 22px; gap: 1px; color: #555; }
.more-users + .pbtn { margin-top: 11px; height: 24px; }

.rail { width: 36px; flex: none; background: #d5d5d5; display: flex; flex-direction: column; align-items: center; color: #444; padding-right: 1px; }
.grip { width: 16px; height: 4px; border: solid #aaa; border-width: 1px 0; margin: 10px 0 17px; }
.rail button { width: 24px; height: 24px; margin-bottom: 12px; flex: none; }
.rail .more { width: 32px; height: 50px; border-top: 1px solid #c4c4c4; margin: -1px 0 0; color: #888; }

/* status bar */
.status { display: flex; align-items: center; height: 26px; flex: none; border-top: 1px solid #d2d2d2; padding: 4px 16px 0 2px; color: #555; line-height: 22px; }
.status > span { display: flex; align-items: center; gap: 4px; padding: 0 7px; border-right: 1px solid #d2d2d2; }
.status > span:nth-of-type(n+5) { padding: 0 10px; }
.status > span:last-of-type { border: 0; padding: 0 13px; }
.views { display: flex; gap: 2px; margin-left: auto; padding-right: 9px; border-right: 1px solid #d2d2d2; }
.views button { width: 24px; height: 22px; color: #444; }
.zoom { display: flex; align-items: center; gap: 10px; padding-left: 11px; color: #333; }
.zoom input { appearance: none; width: 139px; height: 14px; background: linear-gradient(#777, #777) center / 100% 1px no-repeat; }
.zoom input::-webkit-slider-thumb { appearance: none; width: 12px; height: 12px; border: 1px solid #555; border-radius: 6px; background: #eee; }
.fit { margin-left: 4px; }
.taskbar { height: 4px; flex: none; background: #1c2740; }
.taskbar i { display: block; width: 54%; height: 4px; background: #2a3a46; }

/* dialogs */
.dialog { position: absolute; z-index: 2; background: #f0f0f0; border: 1px solid #777; box-shadow: 0 2px 16px rgba(0, 0, 0, .35); color: #000; }
.dialog header { display: flex; align-items: center; gap: 5px; height: 25px; flex: none; padding: 0 10px 0 3px; background: #fff; }
.dialog header .x { margin-left: auto; }
.wbtn { width: 78px; height: 30px; background: #e1e1e1; border: 1px solid #adadad; }
.dialog select, .dbody input[type=text] { display: block; width: 100%; height: 23px; border: 1px solid #7a7a7a; background-color: #fff; padding: 0 5px; }
.find select, .dbody select { background-image: url("data:image/svg+xml,%3Csvg xmlns='http://www.w3.org/2000/svg' width='9' height='6'%3E%3Cpath d='M.5 .5l4 4 4-4' fill='none' stroke='%23444'/%3E%3C/svg%3E"); background-position: right 4px center; }
.ck { display: flex; align-items: center; gap: 5px; height: 24px; }
.ck input { width: 13px; height: 13px; border: 1px solid #333; border-radius: 0; }
.ck input:checked { background-image: url("data:image/svg+xml,%3Csvg xmlns='http://www.w3.org/2000/svg' width='12' height='12'%3E%3Cpath d='M2 6l3 3 5-6' fill='none' stroke='%23333'/%3E%3C/svg%3E"); }
.mixed input { background: linear-gradient(#333, #333) center / 7px 7px no-repeat; }

.find { left: 445px; top: 340px; width: 608px; height: 518px; display: flex; flex-direction: column; padding-bottom: 9px; }
.find header { color: #888; }
.find-tabs { height: 31px; padding: 9px 0 0 8px; flex: none; }
.find-tabs button { height: 22px; width: 62px; border: 1px solid #d9d9d9; border-bottom: 0; }
.find-body { margin: 0 9px 0 7px; height: 374px; background: #fff; border: 1px solid #dcdcdc; padding: 7px 7px 0; flex: none; }
.find-body label:not(.ck) { display: grid; grid-template-columns: 80px 1fr; align-items: center; height: 23px; }
.f2 { line-height: 24px; margin: 2px 0 26px; }
.adv { margin: 54px 0 0 1px; }
.f4 { line-height: 24px; margin: 12px 0 5px; }
.rep { margin: 9px 0 0 8px; flex: none; }
.find-foot { margin: auto 8px 0 auto; }

.fontdlg { left: 496px; top: 287px; width: 506px; height: 623px; display: flex; flex-direction: column; }
.dtabs { display: flex; align-items: flex-end; height: 32px; padding-left: 8px; flex: none; }
.dtabs button { width: 87px; height: 24px; border: 1px solid #dcdcdc; border-left: 0; border-bottom: 0; }
.dtabs .cur { width: 66px; height: 26px; background: #fff; border-left: 1px solid #dcdcdc; margin-bottom: -1px; padding-right: 3px; z-index: 1; }
.dbody { margin: 0 9px 0 7px; height: 518px; flex: none; background: #fff; border: 1px solid #dcdcdc; padding: 6px 7px 0 15px; }
.dbody label:not(.ck), .cell { display: block; line-height: 20px; }
.g4 { display: grid; grid-template-columns: 110px 110px 1fr 1fr; gap: 6px; }
.faces { grid-column: span 2; display: grid; gap: 30px; }
.span2 { grid-column: span 2; }
.list { display: flex; height: 73px; border: 1px solid #7a7a7a; padding: 1px; }
.list ul { flex: 1; padding: 0 0 0 4px; line-height: 23px; color: #222; }
.sb { width: 15px; background: #f0f0f0; display: flex; flex-direction: column; align-items: center; padding: 5px 0; color: #555; }
.sb i { width: 15px; height: 18px; background: #cdcdcd; margin: 4px 0 auto; }
.dbody h3 { display: flex; align-items: center; font-weight: normal; font-size: 12px; line-height: 18px; margin: 10px 0 5px -8px; }
.dbody h3::after { content: ""; flex: 1; height: 1px; background: #a0a0a0; margin-left: 2px; }
.pick { display: flex; width: 100%; height: 23px; background: #e1e1e1; border: 1px solid #adadad; justify-content: flex-end; padding-right: 5px; }
.pick::after { content: ""; border: 4px solid transparent; border-top-color: #000; border-bottom: 0; }
.pick.open { background: #cce4f7; border-color: #2a5c94; }
.effects { height: 97px; margin: -1px 0 0 232px; }
.effects + h3 { margin-top: 0; }
.preview { display: grid; grid-template-columns: 1fr 1fr 1fr; align-items: center; height: 58px; border: 1px solid #000; text-align: center; margin-top: 6px; }
.preview i { width: 110px; height: 1px; background: #000; margin-top: 9px; }
.preview i:last-child { margin-left: auto; }
.note { margin-top: 7px; line-height: 18px; }
.fontdlg footer { display: flex; gap: 7px; padding: 8px 7px 0 8px; }
.fontdlg .wbtn:disabled { background: #ccc; border-color: #bfbfbf; color: #999; margin-right: auto; }
.fontdlg .ok { border: 2px solid #1874c0; }

.popup { position: absolute; left: 23px; top: 331px; width: 194px; height: 217px; background: #fff; border: 1px solid #c6c6c6; box-shadow: 1px 1px 3px rgba(0, 0, 0, .3); color: #444; }
.popup h4 { height: 22px; line-height: 24px; padding-left: 10px; background: #f5f5f5; font-weight: normal; font-size: 12px; }
.swatches { display: grid; grid-template-columns: repeat(10, 13px); gap: 1px 5px; padding: 5px 5px; }
.swatches button { height: 13px; border: 1px solid rgba(220, 220, 220, .5); }
.shades { padding: 4px 5px; }
.shades button { border-width: 0 0 1px; }
.popup hr { border: 0; border-top: 1px solid #777; margin: 1px 1px 2px; }
.popup > button { display: flex; justify-content: flex-start; height: 22px; padding-left: 6px; gap: 8px; width: 100%; }
.auto { width: 14px; height: 13px; background: #000; margin: 0 2px; }

.arrows { position: absolute; z-index: 3; left: 500px; top: 530px; filter: drop-shadow(3px 2px 2px rgba(0, 0, 0, .5)); pointer-events: none; }
.activate { position: absolute; z-index: 1; left: calc(100% - 128px); top: 900px; color: #a2a2a2; white-space: nowrap; }
.activate b { display: block; font-weight: normal; font-size: 20px; line-height: 26px; }
.activate span { font-size: 14px; line-height: 22px; }
.brand { position: absolute; z-index: 1; right: 11px; bottom: 4px; display: flex; align-items: center; }
.brand svg { margin-right: -4px; }
.brand b { display: block; font-size: 21px; line-height: 26px; color: #4b93d4; text-shadow: 0 0 2px #fff; }
.brand span { display: block; font: 17px/18px "Liberation Sans", sans-serif; color: #44b35a; text-shadow: 0 0 2px #fff; }
```
